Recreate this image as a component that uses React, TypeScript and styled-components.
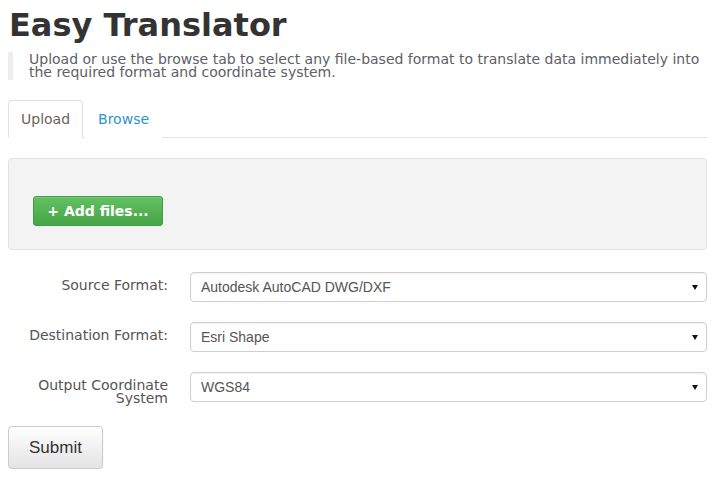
import React from "react";
import styled, { createGlobalStyle } from "styled-components";

const GlobalStyle = createGlobalStyle`
  body {
    margin: 8px;
    background: #ffffff;
    font-family: "DejaVu Sans", Verdana, sans-serif;
    color: #555555;
  }
`;

const fields = [
  { label: "Source Format:", value: "Autodesk AutoCAD DWG/DXF" },
  { label: "Destination Format:", value: "Esri Shape" },
  { label: "Output Coordinate System", value: "WGS84" },
];

const App: React.FC = () => {
  return (
    <Page>
      <GlobalStyle />
      <Title>Easy Translator</Title>
      <Lead>
        Upload or use the browse tab to select any file-based format to
        translate data immediately into the required format and coordinate
        system.
      </Lead>

      <Tabs>
        <Tab active>Upload</Tab>
        <Tab>Browse</Tab>
      </Tabs>

      <Well>
        <AddButton>+ Add files...</AddButton>
      </Well>

      <Form>
        {fields.map((field) => (
          <Row key={field.label}>
            <Label>{field.label}</Label>
            <SelectWrap>
              <Select defaultValue={field.value}>
                <option>{field.value}</option>
              </Select>
            </SelectWrap>
          </Row>
        ))}
      </Form>

      <SubmitButton>Submit</SubmitButton>
    </Page>
  );
};

export default App;

const Page = styled.div`
  width: 699px;
`;

const Title = styled.h1`
  margin: 0;
  font-size: 32px;
  line-height: 34px;
  font-weight: bold;
  color: #333333;
  padding-left: 1px;
`;

const Lead = styled.blockquote`
  margin: 10px 0 20px 0;
  padding: 1px 0 1px 16px;
  border-left: 5px solid #eeeeee;
  font-size: 14px;
  line-height: 13px;
  color: #5e6066;
`;

const Tabs = styled.div`
  display: flex;
  border-bottom: 1px solid #e2e2e2;
`;

const Tab = styled.div<{ active?: boolean }>`
  padding: 8px 12px;
  margin-right: 2px;
  margin-bottom: -1px;
  font-size: 14px;
  line-height: 20px;
  border: 1px solid ${(p) => (p.active ? "#e0e0e0" : "transparent")};
  border-bottom-color: ${(p) => (p.active ? "#ffffff" : "transparent")};
  border-radius: 4px 4px 0 0;
  background: #ffffff;
  color: ${(p) => (p.active ? "#6b625a" : "#2a96d4")};
`;

const Well = styled.div`
  margin-top: 20px;
  padding: 37px 24px 23px 24px;
  background: #f3f3f3;
  border: 1px solid #e3e3e3;
  border-radius: 4px;
`;

const AddButton = styled.button`
  display: block;
  height: 30px;
  width: 130px;
  padding: 0;
  font-family: "DejaVu Sans", Verdana, sans-serif;
  font-size: 14px;
  font-weight: bold;
  color: #ffffff;
  background: linear-gradient(#62c162, #47a447);
  border: 1px solid #429c42;
  border-radius: 3px;
  box-shadow: inset 0 1px 0 rgba(255, 255, 255, 0.15);
`;

const Form = styled.div`
  display: flex;
  flex-direction: column;
  gap: 20px;
  margin-top: 22px;
`;

const Row = styled.div`
  display: grid;
  grid-template-columns: 160px 1fr;
  column-gap: 22px;
  align-items: start;
`;

const Label = styled.label`
  padding-top: 7px;
  text-align: right;
  font-size: 14px;
  line-height: 13px;
  color: #555555;
`;

const SelectWrap = styled.div`
  position: relative;

  &::after {
    content: "";
    position: absolute;
    right: 9px;
    top: 13px;
    border-left: 3px solid transparent;
    border-right: 3px solid transparent;
    border-top: 5px solid #111111;
    pointer-events: none;
  }
`;

const Select = styled.select`
  appearance: none;
  display: block;
  width: 100%;
  height: 30px;
  padding: 0 24px 0 10px;
  font-family: "Liberation Sans", Arial, sans-serif;
  font-size: 14px;
  color: #555555;
  background: #ffffff;
  border: 1px solid #cfcfcf;
  border-radius: 4px;
  box-shadow: inset 0 1px 1px rgba(0, 0, 0, 0.05);
  outline: none;
`;

const SubmitButton = styled.button`
  display: block;
  margin-top: 21px;
  width: 95px;
  height: 43px;
  padding: 0;
  font-family: "Liberation Sans", Arial, sans-serif;
  font-size: 17px;
  color: #333333;
  background: linear-gradient(#ffffff, #e3e3e3);
  border: 1px solid #cccccc;
  border-radius: 4px;
  box-shadow: 0 1px 2px rgba(0, 0, 0, 0.1);
`;
